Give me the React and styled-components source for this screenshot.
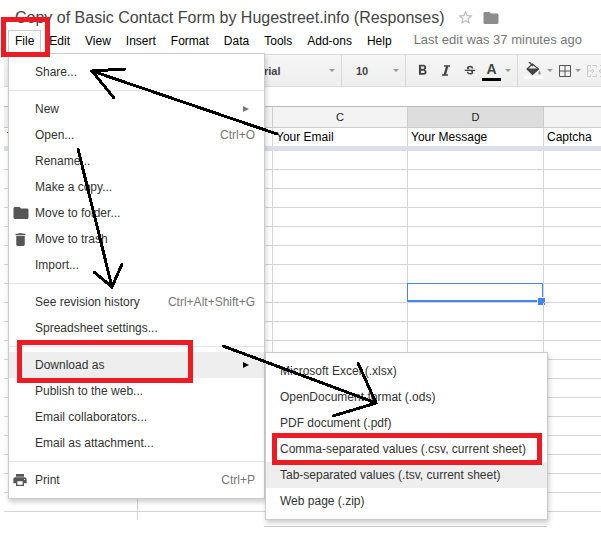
import React from "react";
import styled, { createGlobalStyle } from "styled-components";
import {
  MdFolder,
  MdDelete,
  MdPrint,
  MdStarBorder,
  MdFormatBold,
  MdStrikethroughS
} from "react-icons/md";

const GlobalStyle = createGlobalStyle`
  * {
    box-sizing: border-box;
  }
  body {
    margin: 0;
    background: #fff;
    color: #222;
    font-family: "Liberation Sans", Arial, sans-serif;
    font-size: 12px;
    overflow: hidden;
  }
  button,
  select {
    margin: 0;
    padding: 0;
    border: 0;
    background: none;
    color: inherit;
    font: inherit;
  }
`;

const Page = styled.div`
  position: relative;
`;

const TitleBar = styled.header`
  display: flex;
  align-items: center;
  height: 30px;
  padding: 5px 0 0 15px;
`;

const Title = styled.h1`
  margin: 0 12px 0 0;
  color: #444;
  font-size: 16px;
  font-weight: normal;
  line-height: 24px;
  white-space: nowrap;
`;

const TitleButton = styled.button`
  display: flex;
  margin-right: 8px;
  color: ${({ $color }) => $color};
`;

const MenuBar = styled.nav`
  display: flex;
  height: 24px;
  padding-left: 8px;
  white-space: nowrap;
`;

const MenuButton = styled.button`
  margin-right: 1px;
  padding: 0 6px 3px;
  border: 1px solid ${({ $open }) => ($open ? "#ccc" : "transparent")};
  border-bottom: 0;
  color: #000;
`;

const LastEdit = styled.span`
  padding-left: 14px;
  color: #777;
  font-size: 13px;
  line-height: 20px;
`;

const Toolbar = styled.div`
  display: flex;
  height: 33px;
  margin-left: 4px;
  padding-left: 246px;
  overflow: hidden;
  border: solid #d9d9d9;
  border-width: 1px 0;
  background: linear-gradient(#f6f6f6, #eee);
  color: #444;
`;

const ToolGroup = styled.div`
  display: flex;
  flex: none;
  align-items: center;
  width: ${({ $width }) => $width};
  padding-left: ${({ $pad }) => $pad};
  border-right: 1px solid #d9d9d9;

  &:last-child {
    border-right: 0;
  }
`;

const ToolSelect = styled.select`
  flex: 1;
  appearance: none;
  font-size: 11px;
  font-weight: bold;
`;

const ToolButton = styled.button`
  display: flex;
  flex: none;
  flex-direction: column;
  align-items: center;
  width: ${({ $width }) => $width || "24px"};
`;

const ColorBar = styled.span`
  width: 19px;
  height: 3px;
  background: ${({ $color }) => $color};
`;

const TextColor = styled.span`
  font-size: 14px;
  font-weight: bold;
  line-height: 18px;
`;

const Caret = styled.span`
  flex: none;
  border: 3px solid transparent;
  border-top-color: #999;
  border-bottom: 0;
  margin: 0 6px 0 4px;
`;

const Sheet = styled.table`
  width: calc(100% - 4px);
  margin: 19px 0 0 4px;
  border-collapse: separate;
  border-spacing: 0;
  border-top: 1px solid #bbb;
  table-layout: fixed;
`;

const ColumnHead = styled.th`
  height: 21px;
  padding: 0;
  border: solid #ccc;
  border-width: 0 1px 1px 0;
  background: ${({ $active }) => ($active ? "#ddd" : "#f3f3f3")};
  font-size: 11px;
  font-weight: normal;
  line-height: 18px;

  &:last-child {
    border-right: 0;
  }
`;

const Cell = styled.td`
  position: relative;
  height: 19px;
  padding: 0 3px;
  border: solid #d4d4d4;
  border-width: 0 1px 1px 0;
  color: #000;
  line-height: 18px;
  white-space: nowrap;

  &:last-child {
    border-right: 0;
  }
`;

const HeadingCell = styled(Cell)`
  height: 18px;
  border-bottom: 0;
`;

const FrozenBar = styled.td`
  height: 5px;
  padding: 0;
  background: #dadfe8;
`;

const LastCell = styled(Cell)`
  height: 8px;
  border-bottom: 0;
`;

const Selection = styled.span`
  position: absolute;
  inset: -1px 0 0 -1px;
  border: 1px solid #4285f4;
  border-bottom-width: 2px;

  &::after {
    content: "";
    position: absolute;
    right: -3px;
    bottom: -5px;
    width: 7px;
    height: 7px;
    border: solid #fff;
    border-width: 1px 0 0 1px;
    background: #4285f4;
  }
`;

const SheetEdge = styled.div`
  height: 7px;
  margin: 0 54px 0 264px;
  border-bottom: 1px solid #ccc;
`;

const Menu = styled.div`
  position: absolute;
  top: ${({ $top }) => $top};
  left: ${({ $left }) => $left};
  width: ${({ $width }) => $width};
  padding: 5px 0;
  border: 1px solid #ccc;
  background: #fff;
  box-shadow: 1px 3px 5px rgba(0, 0, 0, 0.2);
`;

const MenuItem = styled.button`
  display: flex;
  align-items: center;
  width: 100%;
  height: 26px;
  padding: 0 9px 0 ${({ $compact }) => ($compact ? "14px" : "3px")};
  background: ${({ $active }) => ($active ? "#eee" : "none")};
  color: #333;
  text-align: left;
  white-space: nowrap;
`;

const ItemIcon = styled.span`
  display: flex;
  flex: none;
  width: 23px;
  color: #555;
`;

const Shortcut = styled.span`
  margin-left: auto;
  color: #777;
`;

const SubArrow = styled.span`
  margin: 0 6px 0 auto;
  border: 3px solid transparent;
  border-left: 6px solid ${({ $dark }) => ($dark ? "#000" : "#777")};
  border-right: 0;
`;

const Separator = styled.hr`
  margin: 5px 0;
  border: 0;
  border-top: 1px solid #e5e5e5;
`;

const Annotations = styled.svg`
  position: absolute;
  top: 0;
  left: 0;
  pointer-events: none;
`;

const ItalicIcon = () => (
  <svg width="10" height="11" fill="none" stroke="#444">
    <path d="M3 1h6M1 10h6" strokeWidth="1.5" />
    <path d="M6.3 1 3.7 10" strokeWidth="2.4" />
  </svg>
);

const FillIcon = () => (
  <svg width="16" height="14" fill="none" stroke="#444">
    <path d="M1 7 6.5 2l6 5-6 5.5z" strokeWidth="1.2" />
    <path d="M1 7h11.5l-6 5.5z" fill="#444" />
    <path d="m3 0 4 4" strokeWidth="1.4" />
    <path d="M13.5 8.5c-2 3-1.5 4 0 4s2-1 0-4z" fill="#999" stroke="none" />
  </svg>
);

const BordersIcon = () => (
  <svg width="12" height="12" fill="none" stroke="#555">
    <path d="M.5.5h11v11H.5zM6 0v12M0 6h12" />
  </svg>
);

const MergeIcon = () => (
  <svg width="20" height="12" fill="none" stroke="#ccc">
    <path d="M3.5 2.5v-2h-3v11h3v-2M5.5.5h4v2M5.5 11.5h4v-2M19 .5h-6M19 11.5h-6M1 6h6M5 4l2 2-2 2M18 6h-6M14 4l-2 2 2 2" />
  </svg>
);

const menus = ["File", "Edit", "View", "Insert", "Format", "Data", "Tools", "Add-ons", "Help"];

const fileMenu = [
  [{ label: "Share..." }],
  [
    { label: "New", sub: true },
    { label: "Open...", shortcut: "Ctrl+O" },
    { label: "Rename..." },
    { label: "Make a copy..." },
    { label: "Move to folder...", icon: <MdFolder size={18} /> },
    { label: "Move to trash", icon: <MdDelete size={17} /> },
    { label: "Import..." }
  ],
  [
    { label: "See revision history", shortcut: "Ctrl+Alt+Shift+G" },
    { label: "Spreadsheet settings..." }
  ],
  [
    { label: "Download as", sub: true, active: true },
    { label: "Publish to the web..." },
    { label: "Email collaborators..." },
    { label: "Email as attachment..." }
  ],
  [{ label: "Print", shortcut: "Ctrl+P", icon: <MdPrint size={16} /> }]
];

const formats = [
  "Microsoft Excel (.xlsx)",
  "OpenDocument format (.ods)",
  "PDF document (.pdf)",
  "Comma-separated values (.csv, current sheet)",
  "Tab-separated values (.tsv, current sheet)",
  "Web page (.zip)"
];

const columns = ["", "", "C", "D", ""];
const headings = ["T", "", "Your Email", "Your Message", "Captcha"];
const rows = Array.from({ length: 19 }, (_, i) => i);

const FileMenu = () => (
  <Menu $top="53px" $left="8px" $width="257px">
    {fileMenu.map((group, g) => (
      <React.Fragment key={g}>
        {g > 0 && <Separator />}
        {group.map(({ label, icon, shortcut, sub, active }) => (
          <MenuItem key={label} $active={active}>
            <ItemIcon>{icon}</ItemIcon>
            {label}
            {shortcut && <Shortcut>{shortcut}</Shortcut>}
            {sub && <SubArrow $dark={active} />}
          </MenuItem>
        ))}
      </React.Fragment>
    ))}
  </Menu>
);

const DownloadMenu = () => (
  <Menu $top="352px" $left="265px" $width="283px">
    {formats.map(label => (
      <MenuItem key={label} $compact $active={label.startsWith("Tab")}>
        {label}
      </MenuItem>
    ))}
  </Menu>
);

const Col = styled.col`
  width: ${({ $width }) => $width};
`;

const Grid = () => (
  <Sheet>
    <colgroup>
      <Col $width="134px" />
      <Col $width="135px" />
      <Col $width="135px" />
      <Col $width="136px" />
      <Col />
    </colgroup>
    <thead>
      <tr>
        {columns.map((name, i) => (
          <ColumnHead key={i} $active={name === "D"}>
            {name}
          </ColumnHead>
        ))}
      </tr>
    </thead>
    <tbody>
      <tr>
        {headings.map((text, i) => (
          <HeadingCell key={i}>{text}</HeadingCell>
        ))}
      </tr>
      <tr>
        <FrozenBar colSpan={5} />
      </tr>
      {rows.map(row => (
        <tr key={row}>
          {columns.map((name, i) => (
            <Cell key={i}>{row === 7 && name === "D" && <Selection />}</Cell>
          ))}
        </tr>
      ))}
      <tr>
        {columns.map((name, i) => (
          <LastCell key={i} />
        ))}
      </tr>
    </tbody>
  </Sheet>
);

const App = () => (
  <Page>
    <GlobalStyle />
    <TitleBar>
      <Title>Copy of Basic Contact Form by Hugestreet.info (Responses)</Title>
      <TitleButton $color="#bbb" aria-label="Star">
        <MdStarBorder size={17} />
      </TitleButton>
      <TitleButton $color="#8d8d8d" aria-label="Folder">
        <MdFolder size={18} />
      </TitleButton>
    </TitleBar>
    <MenuBar>
      {menus.map(name => (
        <MenuButton key={name} $open={name === "File"}>
          {name}
        </MenuButton>
      ))}
      <LastEdit>Last edit was 37 minutes ago</LastEdit>
    </MenuBar>
    <Toolbar>
      <ToolGroup $width="92px" $pad="6px">
        <ToolSelect aria-label="Font">
          <option>Arial</option>
        </ToolSelect>
        <Caret />
      </ToolGroup>
      <ToolGroup $width="64px" $pad="14px">
        <ToolSelect aria-label="Font size">
          <option>10</option>
        </ToolSelect>
        <Caret />
      </ToolGroup>
      <ToolGroup $width="112px" $pad="4px">
        <ToolButton aria-label="Bold">
          <MdFormatBold size={17} />
        </ToolButton>
        <ToolButton aria-label="Italic">
          <ItalicIcon />
        </ToolButton>
        <ToolButton aria-label="Strikethrough">
          <MdStrikethroughS size={14} />
        </ToolButton>
        <ToolButton $width="19px" aria-label="Text color">
          <TextColor>A</TextColor>
          <ColorBar $color="#000" />
        </ToolButton>
        <Caret />
      </ToolGroup>
      <ToolGroup $pad="6px">
        <ToolButton $width="19px" aria-label="Fill color">
          <FillIcon />
          <ColorBar $color="#fff" />
        </ToolButton>
        <Caret />
        <ToolButton $width="12px" aria-label="Borders">
          <BordersIcon />
        </ToolButton>
        <Caret />
        <ToolButton $width="20px" aria-label="Merge cells">
          <MergeIcon />
        </ToolButton>
      </ToolGroup>
    </Toolbar>
    <Grid />
    <SheetEdge />
    <FileMenu />
    <DownloadMenu />
    <Annotations width="601" height="533" fill="none" shapeRendering="crispEdges">
      <g stroke="#ed1c24" strokeWidth="5">
        <rect x="3.5" y="19.5" width="44" height="35" />
        <rect x="19.5" y="342.5" width="171" height="38" />
        <rect x="274.5" y="435.5" width="265" height="27" />
      </g>
      <g stroke="#000" strokeWidth="3" strokeLinecap="round">
        <path d="M277 134 92 71M125 69 92 71 114 98" />
        <path d="M78 149 112 287M94 272 112 287 122 264" />
        <path d="M223 346 376 403M358 363 376 403 333 416" />
      </g>
    </Annotations>
  </Page>
);

export default App;
